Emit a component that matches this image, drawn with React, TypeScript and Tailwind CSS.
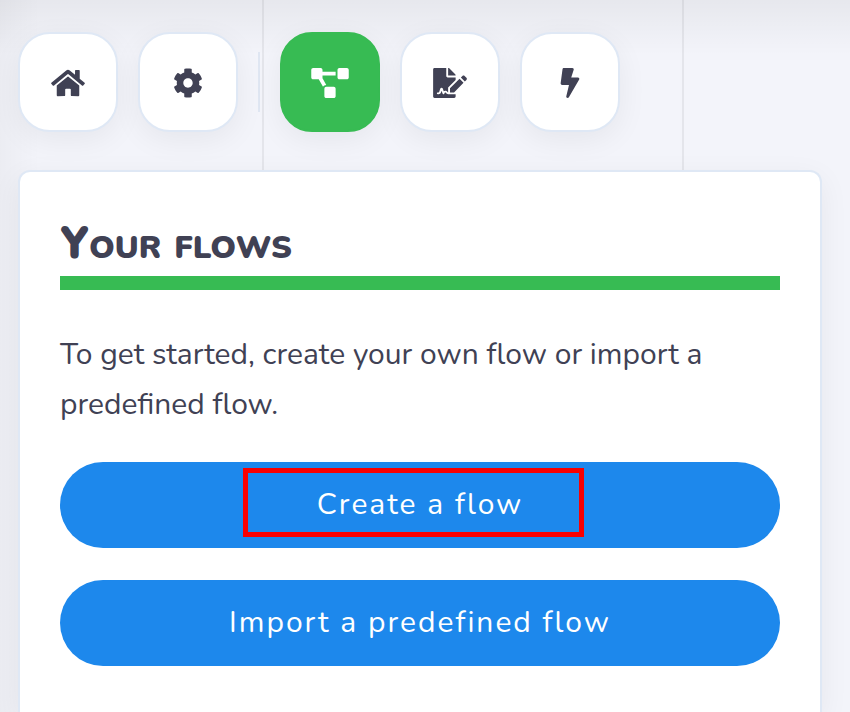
import { FaHome, FaCog, FaProjectDiagram, FaFileSignature, FaBolt } from "react-icons/fa"
import type { IconType } from "react-icons"

interface NavButtonProps {
  label: string
  icon: IconType
  iconSize?: string
  active?: boolean
}

function NavButton({ label, icon: Icon, iconSize = "size-[30px]", active = false }: NavButtonProps) {
  return (
    <button
      type="button"
      aria-label={label}
      className={`flex size-25 shrink-0 cursor-pointer items-center justify-center rounded-4xl border-2 pt-0.5 shadow-[0_8px_30px_rgba(0,0,0,0.06)] ${
        active ? "border-[#37bb53] bg-[#37bb53] text-white" : "border-[#dfe8f5] bg-white text-[#404154]"
      }`}
    >
      <Icon className={iconSize} />
    </button>
  )
}

function ActionButton({ children }: { children: string }) {
  return (
    <button
      type="button"
      className="h-[86px] w-full cursor-pointer rounded-full bg-[#1d88ec] pb-0.5 text-[30px] tracking-[2px] text-white"
    >
      {children}
    </button>
  )
}

export default function App() {
  return (
    <div className="flex min-h-screen flex-col bg-[#f3f4fa] bg-[linear-gradient(to_right,#e4e5eb_2px,transparent_2px)] bg-[length:420px_100%] bg-[position:262px_0] font-['Nunito','Lato',sans-serif] text-[#404154] antialiased">
      <div className="flex grow flex-col bg-[linear-gradient(to_bottom,rgba(0,0,0,0.05),transparent_55px),linear-gradient(to_right,rgba(0,0,0,0.03),transparent_40px)] pt-8 pr-7 pl-[18px]">
        <nav className="flex items-center gap-5">
          <NavButton label="Home" icon={FaHome} iconSize="h-[30px] w-[34px]" />
          <NavButton label="Settings" icon={FaCog} />
          <div className="h-15 w-0.5 bg-[#dfe6f2]" />
          <NavButton label="Flows" icon={FaProjectDiagram} iconSize="h-[30px] w-[38px]" active />
          <NavButton label="Signatures" icon={FaFileSignature} iconSize="h-[30px] w-[34px]" />
          <NavButton label="Actions" icon={FaBolt} />
        </nav>

        <main className="mt-[38px] grow rounded-t-xl border-2 border-b-0 border-[#dfe8f5] bg-white p-10 shadow-[0_8px_30px_rgba(0,0,0,0.06)]">
          <h1 className="border-b-14 border-[#37bb53] text-[45px] leading-16 font-black [font-variant:small-caps]">
            Your flows
          </h1>
          <p className="mt-10 text-[30px] leading-[50px]">
            To get started, create your own flow or import a predefined flow.
          </p>

          <div className="mt-8 flex flex-col gap-8">
            <div className="relative">
              <ActionButton>Create a flow</ActionButton>
              {/* highlight box around the first step */}
              <div className="pointer-events-none absolute top-1.5 left-[calc(50%-177px)] h-[69px] w-[341px] border-5 border-[#fa0000]" />
            </div>
            <ActionButton>Import a predefined flow</ActionButton>
          </div>
        </main>
      </div>
    </div>
  )
}
